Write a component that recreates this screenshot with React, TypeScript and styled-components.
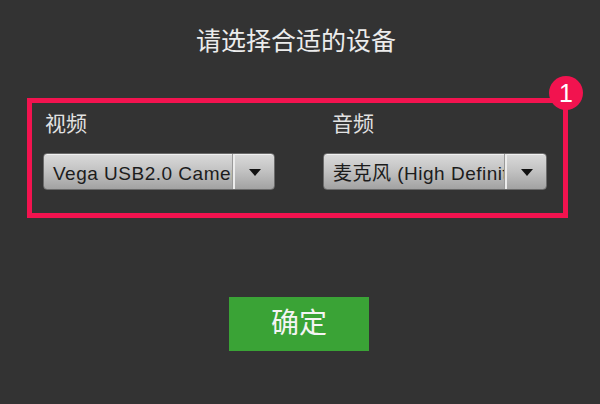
import styled, { createGlobalStyle } from 'styled-components';

const GlobalStyle = createGlobalStyle`
    html, body {
        margin: 0;
        padding: 0;
        background: #333333;
    }
    body {
        font-family: "Liberation Sans", "Noto Sans CJK SC", sans-serif;
    }
`;

const devices = [
    { label: '视频', value: 'Vega USB2.0 Camera', width: 232, indent: 2 },
    { label: '音频', value: '麦克风 (High Definition Audio)', width: 224, indent: 9 },
];

const App = () => {
    return (
        <>
            <GlobalStyle />
            <Page>
                <Title>请选择合适的设备</Title>
                <Highlight>
                    <Badge>1</Badge>
                    {devices.map((d) => (
                        <Field key={d.label}>
                            <Label $indent={d.indent}>{d.label}</Label>
                            <Select $width={d.width}>
                                <SelectValue title={d.value}>{d.value}</SelectValue>
                                <SelectButton>
                                    <Arrow />
                                </SelectButton>
                            </Select>
                        </Field>
                    ))}
                </Highlight>
                <ConfirmButton>确定</ConfirmButton>
            </Page>
        </>
    );
};

export default App;

const Page = styled.div`
    width: 600px;
    height: 404px;
    background: #333333;
    display: flex;
    flex-direction: column;
    overflow: hidden;
`;

const Title = styled.div`
    margin-top: 28px;
    padding-right: 8px;
    text-align: center;
    color: #ececec;
    font-size: 25px;
    line-height: 26px;
`;

const Highlight = styled.div`
    position: relative;
    box-sizing: border-box;
    margin: 44px 0 0 27px;
    width: 541px;
    height: 120px;
    border: 5px solid #f2134f;
    padding: 8px 0 0 11px;
    display: flex;
    gap: 48px;
`;

const Badge = styled.div`
    position: absolute;
    left: 517px;
    top: -27px;
    width: 34px;
    height: 34px;
    border-radius: 50%;
    background: #f2134f;
    color: #ffffff;
    font-size: 25px;
    line-height: 34px;
    text-align: center;
`;

const Field = styled.div`
    display: flex;
    flex-direction: column;
`;

const Label = styled.div<{ $indent: number }>`
    padding-left: ${(p) => p.$indent}px;
    color: #e2e2e2;
    font-size: 21px;
    line-height: 26px;
`;

const Select = styled.div<{ $width: number }>`
    margin-top: 16px;
    box-sizing: border-box;
    width: ${(p) => p.$width}px;
    height: 37px;
    display: flex;
    border-radius: 4px;
    border: 1px solid #6a6a6a;
    background: linear-gradient(#dadada, #c4c4c4 45%, #a2a2a2);
    box-shadow: inset 0 1px 0 rgba(255, 255, 255, 0.6);
    overflow: hidden;
`;

const SelectValue = styled.div`
    flex: 1;
    padding: 0 0 0 9px;
    overflow: hidden;
    white-space: nowrap;
    color: #1c1c1c;
    font-size: 19px;
    letter-spacing: 0.5px;
    line-height: 39px;
`;

const SelectButton = styled.div`
    width: 39px;
    flex: none;
    display: flex;
    align-items: center;
    justify-content: center;
    border-left: 2px solid #ececec;
    box-shadow: -1px 0 0 #9a9a9a;
`;

const Arrow = styled.div`
    width: 0;
    height: 0;
    margin-top: 1px;
    border-left: 6px solid transparent;
    border-right: 6px solid transparent;
    border-top: 7px solid #111111;
`;

const ConfirmButton = styled.div`
    align-self: center;
    margin: 79px 2px 0 0;
    width: 140px;
    height: 54px;
    background: #3aa336;
    color: #f4f4f4;
    font-size: 28px;
    line-height: 54px;
    text-align: center;
`;
